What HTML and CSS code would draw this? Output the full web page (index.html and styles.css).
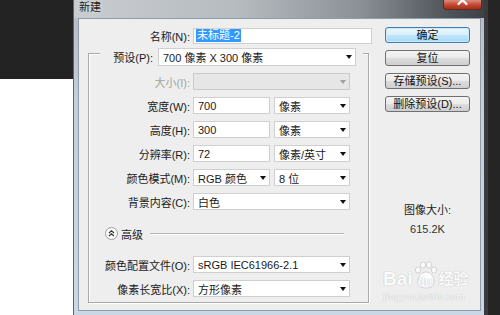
FILE: index.html
```html
<!DOCTYPE html>
<html lang="zh-CN">
<head>
    <meta charset="UTF-8">
    <title>新建</title>
    <link rel="stylesheet" href="styles.css">
</head>
<body>
    <div class="desk-left"><div class="desk-dark"></div></div>

    <div class="window">
        <div class="titlebar">
            <span class="title">新建</span>
            <span class="close">
                <svg width="39" height="10" viewBox="0 0 39 10">
                    <path d="M15.5 -3 L23.5 5 M23.5 -3 L15.5 5" stroke="#fff" stroke-width="2.2" stroke-linecap="round"/>
                </svg>
            </span>
        </div>

        <div class="frame">
            <div class="dialog">
                <div class="form">
                    <div class="row name-row">
                        <span class="lbl">名称(N):</span>
                        <div class="field name-field"><span class="sel">未标题-2</span></div>
                    </div>

                    <div class="group">
                        <div class="preset-row">
                            <span class="lbl">预设(P):</span>
                            <div class="field combo preset"><span>700 像素 X 300 像素</span><i class="arrow"></i></div>
                        </div>
                        <div class="row">
                            <span class="lbl off-text">大小(I):</span>
                            <div class="field combo full off"><span></span><i class="arrow"></i></div>
                        </div>
                        <div class="row">
                            <span class="lbl">宽度(W):</span>
                            <div class="field num"><span>700</span></div>
                            <div class="field combo unit"><span>像素</span><i class="arrow"></i></div>
                        </div>
                        <div class="row">
                            <span class="lbl">高度(H):</span>
                            <div class="field num"><span>300</span></div>
                            <div class="field combo unit"><span>像素</span><i class="arrow"></i></div>
                        </div>
                        <div class="row">
                            <span class="lbl">分辨率(R):</span>
                            <div class="field num"><span>72</span></div>
                            <div class="field combo unit"><span>像素/英寸</span><i class="arrow"></i></div>
                        </div>
                        <div class="row">
                            <span class="lbl">颜色模式(M):</span>
                            <div class="field combo num"><span>RGB 颜色</span><i class="arrow"></i></div>
                            <div class="field combo unit"><span>8 位</span><i class="arrow"></i></div>
                        </div>
                        <div class="row">
                            <span class="lbl">背景内容(C):</span>
                            <div class="field combo full"><span>白色</span><i class="arrow"></i></div>
                        </div>

                        <div class="adv-row">
                            <span class="adv-btn">
                                <svg width="13" height="13" viewBox="0 0 13 13">
                                    <circle cx="6.5" cy="6.5" r="6" fill="#fbfbfb" stroke="#9c9c9c"/>
                                    <path d="M4 6 L6.5 3.8 L9 6 M4 9 L6.5 6.8 L9 9" fill="none" stroke="#333" stroke-width="1.1"/>
                                </svg>
                            </span>
                            <span class="adv-text">高级</span>
                            <span class="adv-line"></span>
                        </div>

                        <div class="row profile-row">
                            <span class="lbl">颜色配置文件(O):</span>
                            <div class="field combo full"><span>sRGB IEC61966-2.1</span><i class="arrow"></i></div>
                        </div>
                        <div class="row">
                            <span class="lbl">像素长宽比(X):</span>
                            <div class="field combo full"><span>方形像素</span><i class="arrow"></i></div>
                        </div>
                    </div>
                </div>

                <div class="side">
                    <button class="btn default">确定</button>
                    <button class="btn">复位</button>
                    <button class="btn">存储预设(S)...</button>
                    <button class="btn">删除预设(D)...</button>
                    <div class="size-label">图像大小:</div>
                    <div class="size-value">615.2K</div>
                </div>

                <div class="watermark">
                    <div class="wm-top">
                        <span class="wm-bai">Bai</span>
                        <span class="wm-paw">
                            <svg width="24" height="28" viewBox="0 0 24 28">
                                <g fill="#fbfbfb" stroke="#d2d2d2" stroke-width="1">
                                    <ellipse cx="4" cy="9" rx="2.6" ry="3.2"/>
                                    <ellipse cx="9" cy="4" rx="2.6" ry="3.2"/>
                                    <ellipse cx="15" cy="4" rx="2.6" ry="3.2"/>
                                    <ellipse cx="20" cy="9" rx="2.6" ry="3.2"/>
                                    <path d="M4 21 C4 14 8 11 12 11 C16 11 20 14 20 21 C20 26 16 27 12 27 C8 27 4 26 4 21 Z"/>
                                </g>
                            </svg>
                            <span class="wm-du">du</span>
                        </span>
                        <span class="wm-jy">经验</span>
                    </div>
                    <div class="wm-url">jingyan.baidu.com</div>
                </div>
            </div>
        </div>
    </div>

    <div class="desk-right"></div>
</body>
</html>
```

FILE: styles.css
```css
body {
    margin: 0;
    width: 500px;
    height: 315px;
    overflow: hidden;
    display: flex;
    background: #fff;
    font-family: "Liberation Sans", "Noto Sans CJK SC", sans-serif;
    font-size: 11px;
    color: #1a1a1a;
}

.desk-left {
    width: 73px;
    flex-shrink: 0;
}
.desk-dark {
    height: 79px;
    background: #232323;
}
.desk-right {
    flex: 1;
    background: linear-gradient(to right, #3b3b3b 0 4px, #252525 4px);
}

.window {
    width: 411px;
    flex-shrink: 0;
    display: flex;
    flex-direction: column;
    box-sizing: border-box;
    border-left: 1px solid #5f656b;
    background: linear-gradient(#b4bac1, #c3ceda 30%, #cad7e5);
}

.titlebar {
    height: 18px;
    position: relative;
    background: linear-gradient(to right, #c9cdd1, #b6bbc0 40%, #8a9096 70%, #4d5257 92%, #3e4246);
}
.title {
    display: block;
    padding-left: 5px;
    line-height: 15px;
    color: #1b1b1b;
    text-shadow: 0 0 3px #e8ecf0;
}
.close {
    position: absolute;
    top: 0;
    right: 2px;
    width: 39px;
    height: 10px;
    box-sizing: border-box;
    border: 1px solid #5e2a22;
    border-top: none;
    border-radius: 0 0 4px 4px;
    background: linear-gradient(#d98c7e, #c5472f 55%, #a92d18);
    overflow: hidden;
}
.close svg {
    display: block;
    margin: -1px 0 0 -1px;
}

.frame {
    flex: 1;
    padding: 0 3px 4px 4px;
}

.dialog {
    position: relative;
    height: 293px;
    box-sizing: border-box;
    border: 1px solid #8f9caa;
    background: #eeeeee;
    display: grid;
    grid-template-columns: 294px 85px;
    column-gap: 12px;
    align-items: start;
    padding-top: 8px;
}

.row {
    display: flex;
    align-items: center;
    height: 17px;
}
.lbl {
    flex-shrink: 0;
    text-align: right;
    white-space: nowrap;
}
.off-text {
    color: #a3a3a3;
}

.field {
    box-sizing: border-box;
    height: 17px;
    margin-left: 3px;
    padding: 0 4px;
    display: flex;
    align-items: center;
    justify-content: space-between;
    background: #fff;
    border: 1px solid #cfcfcf;
    white-space: nowrap;
}
.combo {
    padding-right: 3px;
}
.arrow {
    width: 0;
    height: 0;
    border-left: 3px solid transparent;
    border-right: 3px solid transparent;
    border-top: 4px solid #111;
}
.off {
    background: #e6e6e6;
    border-color: #cacaca;
}
.off .arrow {
    border-top-color: #a0a0a0;
}

.name-row .lbl {
    width: 111px;
}
.name-field {
    width: 179px;
    height: 16px;
    padding-left: 2px;
    justify-content: flex-start;
}
.sel {
    background: #3399ff;
    color: #fff;
    padding: 0 1px;
    line-height: 13px;
}

.group {
    margin: 9px 0 0 9px;
    width: 281px;
    height: 250px;
    box-sizing: border-box;
    border: 1px solid #a9a9a9;
    box-shadow: inset 1px 1px 0 #fff, 1px 1px 0 #fff;
}
.group .row {
    margin-top: 7px;
}
.group .row .lbl {
    width: 101px;
}

.preset-row {
    display: flex;
    align-items: center;
    height: 18px;
    margin: -6px 5px 0 11px;
    background: #eeeeee;
}
.preset-row .lbl {
    flex: 1;
}
.preset {
    width: 198px;
    height: 18px;
    margin-left: 5px;
    margin-right: 7px;
}

.full {
    width: 157px;
}
.num {
    width: 77px;
}
.unit {
    width: 76px;
    margin-left: 4px;
}

.adv-row {
    display: flex;
    align-items: center;
    height: 13px;
    margin: 17px 24px 0 16px;
}
.adv-btn svg {
    display: block;
}
.adv-text {
    margin-left: 3px;
}
.adv-line {
    flex: 1;
    margin-left: 7px;
    height: 1px;
    background: #b4b4b4;
    box-shadow: 0 1px 0 #fff;
}
.group .profile-row {
    margin-top: 16px;
}

.side {
    display: flex;
    flex-direction: column;
}
.btn {
    height: 16px;
    width: 85px;
    margin-bottom: 7px;
    padding: 0;
    font: inherit;
    line-height: 13px;
    color: #111;
    border: 1px solid #707070;
    border-radius: 3px;
    background: linear-gradient(#f3f3f3, #ebebeb 48%, #dddddd 52%, #cfcfcf);
}
.btn.default {
    border-color: #3c7fb1;
    background: linear-gradient(#eaf6fd, #d9f0fc 48%, #bee6fd 52%, #a7d9f5);
    box-shadow: inset 0 0 0 1px #c8eaf9;
}
.size-label {
    margin-top: 84px;
    text-align: center;
    line-height: 14px;
}
.size-value {
    margin-top: 5px;
    text-align: center;
    line-height: 14px;
    color: #333;
}

.watermark {
    position: absolute;
    left: 304px;
    top: 242px;
    color: #fbfbfb;
    text-shadow: 0 0 1px #c4c4c4, 0 0 1px #c4c4c4;
}
.wm-top {
    display: flex;
    align-items: flex-end;
}
.wm-bai {
    font-size: 19px;
    font-weight: bold;
    line-height: 20px;
}
.wm-paw {
    position: relative;
    margin: 0 1px;
}
.wm-paw svg {
    display: block;
}
.wm-du {
    position: absolute;
    left: 4px;
    bottom: 1px;
    font-size: 12px;
    font-weight: bold;
    line-height: 12px;
}
.wm-jy {
    font-size: 15px;
    font-weight: bold;
    line-height: 20px;
}
.wm-url {
    font-family: "Liberation Serif", serif;
    font-size: 11px;
    line-height: 12px;
    margin-top: 1px;
}
```
